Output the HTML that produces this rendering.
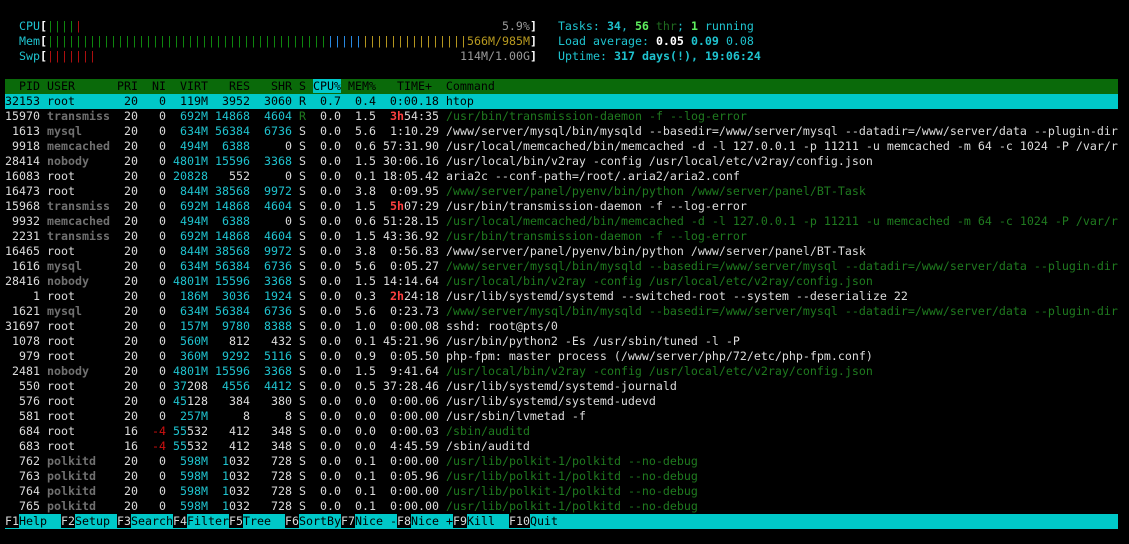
<!DOCTYPE html>
<html><head><meta charset="utf-8"><style>
html,body{margin:0;padding:0;background:#000;width:1129px;height:544px;overflow:hidden}
#t{position:absolute;left:5px;top:19px;width:1113px;font-family:"DejaVu Sans Mono","Liberation Mono",monospace;font-size:11.63px;color:#dcdcdc}
.l{height:15px;line-height:15px;white-space:pre;overflow:hidden}
.c{color:#1fc3cf}.d{color:#707070;font-weight:bold}.g{color:#1f7a1f}.r{color:#ff4040;font-weight:bold}.nr{color:#d01010}
.b{font-weight:bold;color:#fff}.gb{color:#0f8a0f}.rb{color:#b01010}.bb{color:#2a8ee8}.yb{color:#b89a20}.gr{color:#9a9a9a}
.bc{color:#1fc3cf;font-weight:bold}.bg{color:#5fef5f;font-weight:bold}.dg{color:#1f6a1f}
.hd{background:#0a6a0a;color:#000}.sel{background:#00c8c8;color:#000}.cy{background:#00c8c8;color:#000}
.ft{background:#00c8c8}.k{background:#000;color:#dcdcdc}
</style></head><body><div id="t">
<div class="l">  <span class="c">CPU</span><span class="b">[</span><span class="gb">||||</span><span class="rb">|</span>                                                            <span class="gr">5.9%</span><span class="b">]</span>   <span class="c">Tasks: </span><span class="bc">34</span><span class="c">, </span><span class="bg">56</span><span class="dg"> thr</span><span class="c">; </span><span class="bg">1</span><span class="c"> running</span></div>
<div class="l">  <span class="c">Mem</span><span class="b">[</span><span class="gb">||||||||||||||||||||||||||||||||||||||||</span><span class="bb">|||||</span><span class="yb">|||||||||||||||566M/985M</span><span class="b">]</span>   <span class="c">Load average: </span><span class="b">0.05 </span><span class="bc">0.09 </span><span class="c">0.08</span></div>
<div class="l">  <span class="c">Swp</span><span class="b">[</span><span class="rb">|||||||</span>                                                    <span class="gr">114M/1.00G</span><span class="b">]</span>   <span class="c">Uptime: </span><span class="bc">317 days(!), 19:06:24</span></div>
<div class="l"> </div>
<div class="l hd">  PID USER      PRI  NI  VIRT   RES   SHR S <span class="cy">CPU%</span> MEM%   TIME+  Command</div>
<div class="l sel">32153 root       20   0  119M  3952  3060 R  0.7  0.4  0:00.18 htop</div>
<div class="l">15970 <span class="d">transmiss</span>  20   0 <span class="c"> 692M 14868  4604</span> <span class="g">R</span>  0.0  1.5  <span class="r">3h</span>54:35 <span class="g">/usr/bin/transmission-daemon -f --log-error</span></div>
<div class="l"> 1613 <span class="d">mysql    </span>  20   0 <span class="c"> 634M 56384  6736</span> S  0.0  5.6  1:10.29 /www/server/mysql/bin/mysqld --basedir=/www/server/mysql --datadir=/www/server/data --plugin-dir=/www/server/mysql/lib/plugin</div>
<div class="l"> 9918 <span class="d">memcached</span>  20   0 <span class="c"> 494M  6388</span>     0 S  0.0  0.6 57:31.90 /usr/local/memcached/bin/memcached -d -l 127.0.0.1 -p 11211 -u memcached -m 64 -c 1024 -P /var/run/memcached.pid</div>
<div class="l">28414 <span class="d">nobody   </span>  20   0 <span class="c">4801M 15596  3368</span> S  0.0  1.5 30:06.16 /usr/local/bin/v2ray -config /usr/local/etc/v2ray/config.json</div>
<div class="l">16083 root       20   0 <span class="c">20828</span>   552     0 S  0.0  0.1 18:05.42 aria2c --conf-path=/root/.aria2/aria2.conf</div>
<div class="l">16473 root       20   0 <span class="c"> 844M 38568  9972</span> S  0.0  3.8  0:09.95 <span class="g">/www/server/panel/pyenv/bin/python /www/server/panel/BT-Task</span></div>
<div class="l">15968 <span class="d">transmiss</span>  20   0 <span class="c"> 692M 14868  4604</span> S  0.0  1.5  <span class="r">5h</span>07:29 /usr/bin/transmission-daemon -f --log-error</div>
<div class="l"> 9932 <span class="d">memcached</span>  20   0 <span class="c"> 494M  6388</span>     0 S  0.0  0.6 51:28.15 <span class="g">/usr/local/memcached/bin/memcached -d -l 127.0.0.1 -p 11211 -u memcached -m 64 -c 1024 -P /var/run/memcached.pid</span></div>
<div class="l"> 2231 <span class="d">transmiss</span>  20   0 <span class="c"> 692M 14868  4604</span> S  0.0  1.5 43:36.92 <span class="g">/usr/bin/transmission-daemon -f --log-error</span></div>
<div class="l">16465 root       20   0 <span class="c"> 844M 38568  9972</span> S  0.0  3.8  0:56.83 /www/server/panel/pyenv/bin/python /www/server/panel/BT-Task</div>
<div class="l"> 1616 <span class="d">mysql    </span>  20   0 <span class="c"> 634M 56384  6736</span> S  0.0  5.6  0:05.27 <span class="g">/www/server/mysql/bin/mysqld --basedir=/www/server/mysql --datadir=/www/server/data --plugin-dir=/www/server/mysql/lib/plugin</span></div>
<div class="l">28416 <span class="d">nobody   </span>  20   0 <span class="c">4801M 15596  3368</span> S  0.0  1.5 14:14.64 <span class="g">/usr/local/bin/v2ray -config /usr/local/etc/v2ray/config.json</span></div>
<div class="l">    1 root       20   0 <span class="c"> 186M  3036  1924</span> S  0.0  0.3  <span class="r">2h</span>24:18 /usr/lib/systemd/systemd --switched-root --system --deserialize 22</div>
<div class="l"> 1621 <span class="d">mysql    </span>  20   0 <span class="c"> 634M 56384  6736</span> S  0.0  5.6  0:23.73 <span class="g">/www/server/mysql/bin/mysqld --basedir=/www/server/mysql --datadir=/www/server/data --plugin-dir=/www/server/mysql/lib/plugin</span></div>
<div class="l">31697 root       20   0 <span class="c"> 157M  9780  8388</span> S  0.0  1.0  0:00.08 sshd: root@pts/0</div>
<div class="l"> 1078 root       20   0 <span class="c"> 560M</span>   812   432 S  0.0  0.1 45:21.96 /usr/bin/python2 -Es /usr/sbin/tuned -l -P</div>
<div class="l">  979 root       20   0 <span class="c"> 360M  9292  5116</span> S  0.0  0.9  0:05.50 php-fpm: master process (/www/server/php/72/etc/php-fpm.conf)</div>
<div class="l"> 2481 <span class="d">nobody   </span>  20   0 <span class="c">4801M 15596  3368</span> S  0.0  1.5  9:41.64 <span class="g">/usr/local/bin/v2ray -config /usr/local/etc/v2ray/config.json</span></div>
<div class="l">  550 root       20   0 <span class="c">37</span>208 <span class="c"> 4556  4412</span> S  0.0  0.5 37:28.46 /usr/lib/systemd/systemd-journald</div>
<div class="l">  576 root       20   0 <span class="c">45</span>128   384   380 S  0.0  0.0  0:00.06 /usr/lib/systemd/systemd-udevd</div>
<div class="l">  581 root       20   0 <span class="c"> 257M</span>     8     8 S  0.0  0.0  0:00.00 /usr/sbin/lvmetad -f</div>
<div class="l">  684 root       16 <span class="nr"> -4</span> <span class="c">55</span>532   412   348 S  0.0  0.0  0:00.03 <span class="g">/sbin/auditd</span></div>
<div class="l">  683 root       16 <span class="nr"> -4</span> <span class="c">55</span>532   412   348 S  0.0  0.0  4:45.59 /sbin/auditd</div>
<div class="l">  762 <span class="d">polkitd  </span>  20   0 <span class="c"> 598M  1</span>032   728 S  0.0  0.1  0:00.00 <span class="g">/usr/lib/polkit-1/polkitd --no-debug</span></div>
<div class="l">  763 <span class="d">polkitd  </span>  20   0 <span class="c"> 598M  1</span>032   728 S  0.0  0.1  0:05.96 <span class="g">/usr/lib/polkit-1/polkitd --no-debug</span></div>
<div class="l">  764 <span class="d">polkitd  </span>  20   0 <span class="c"> 598M  1</span>032   728 S  0.0  0.1  0:00.00 <span class="g">/usr/lib/polkit-1/polkitd --no-debug</span></div>
<div class="l">  765 <span class="d">polkitd  </span>  20   0 <span class="c"> 598M  1</span>032   728 S  0.0  0.1  0:00.00 <span class="g">/usr/lib/polkit-1/polkitd --no-debug</span></div>
<div class="l ft" style="color:#000"><span class="k">F1</span>Help  <span class="k">F2</span>Setup <span class="k">F3</span>Search<span class="k">F4</span>Filter<span class="k">F5</span>Tree  <span class="k">F6</span>SortBy<span class="k">F7</span>Nice -<span class="k">F8</span>Nice +<span class="k">F9</span>Kill  <span class="k">F10</span>Quit</div>
</div></body></html>
